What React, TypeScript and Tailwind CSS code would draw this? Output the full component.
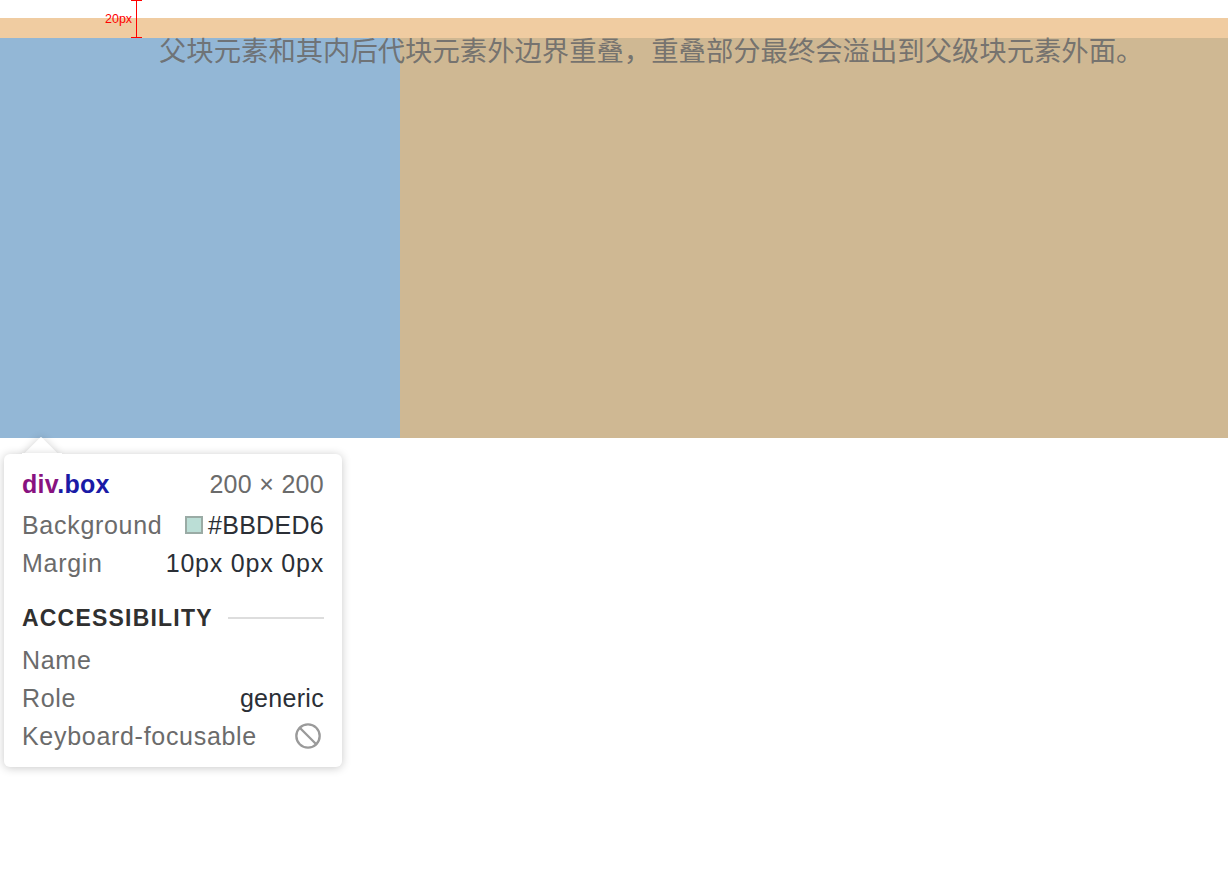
import { Ban } from "lucide-react";

const sans = "font-['Liberation_Sans',Arial,sans-serif]";

function Row({ label, children }: { label: string; children?: React.ReactNode }) {
  return (
    <div className="flex h-[38px] items-center justify-between">
      <span className="text-[#6b6b6b]">{label}</span>
      {children}
    </div>
  );
}

export default function App() {
  return (
    <div className="relative h-[882px] w-[1228px] overflow-hidden bg-white">
      <div className="h-[18px]" />
      <div className="h-[20px] bg-[#f0cca1]" />
      <div className="flex h-[400px]">
        <div className="w-[400px] bg-[#93b7d6]" />
        <div className="flex-1 bg-[#cfb893]" />
      </div>

      {/* paragraph text behind the highlight */}
      <p className="absolute left-[159px] top-[30px] whitespace-nowrap font-['Noto_Sans_CJK_SC',sans-serif] text-[27.35px] leading-[38px] text-[#6a6a6a]/90">
        父块元素和其内后代块元素外边界重叠，重叠部分最终会溢出到父级块元素外面。
      </p>

      {/* 20px measure */}
      <div className="absolute left-[131px] top-0 flex h-[38px] w-[11px] flex-col items-center justify-between">
        <div className="h-px w-[11px] bg-[#ff0000]" />
        <div className="w-px flex-1 bg-[#ff0000]" />
        <div className="h-px w-[11px] bg-[#ff0000]" />
      </div>
      <span className={`absolute left-[105px] top-[12px] text-[12.5px] leading-[14px] text-[#ff0000] ${sans}`}>
        20px
      </span>

      {/* inspect tooltip */}
      <div className={`absolute left-[4px] top-[454px] w-[338px] ${sans} text-[25px] leading-none tracking-[0.7px]`}>
        <div className="absolute -top-[12px] left-[24px] h-[26px] w-[26px] rotate-45 rounded-[2px] bg-white shadow-[0_0_8px_rgba(0,0,0,0.18)]" />
        <div className="relative rounded-[6px] bg-white px-[18px] pt-[9px] pb-[12px] shadow-[0_1px_10px_rgba(0,0,0,0.22)]">
          <div className="absolute -top-[1px] left-[18px] h-[20px] w-[40px] bg-white" />
          <div className="relative flex h-[43px] items-center justify-between">
            <span className="font-bold tracking-[0.3px]">
              <span className="text-[#881280]">div</span>
              <span className="text-[#1a1aa6]">.box</span>
            </span>
            <span className="tracking-[0.3px] text-[#6b6b6b]">200 × 200</span>
          </div>
          <Row label="Background">
            <span className="flex items-center gap-[5px] tracking-[0.3px] text-[#2b2f36]">
              <span className="h-[18px] w-[18px] border-2 border-[#9aaba5] bg-[#bbded6]" />
              #BBDED6
            </span>
          </Row>
          <Row label="Margin">
            <span className="tracking-[0.8px] text-[#2b2f36]">10px 0px 0px</span>
          </Row>
          <div className="mt-[17px] mb-[4px] flex h-[38px] items-center gap-[15px]">
            <span className="text-[23px] font-bold tracking-[1.2px] text-[#303030]">ACCESSIBILITY</span>
            <div className="h-[2px] flex-1 bg-[#dddddd]" />
          </div>
          <Row label="Name" />
          <Row label="Role">
            <span className="tracking-[0.3px] text-[#2b2f36]">generic</span>
          </Row>
          <Row label="Keyboard-focusable">
            <Ban className="mr-[2px] h-[28px] w-[28px] text-[#9a9a9a]" strokeWidth={2} />
          </Row>
        </div>
      </div>
    </div>
  );
}
